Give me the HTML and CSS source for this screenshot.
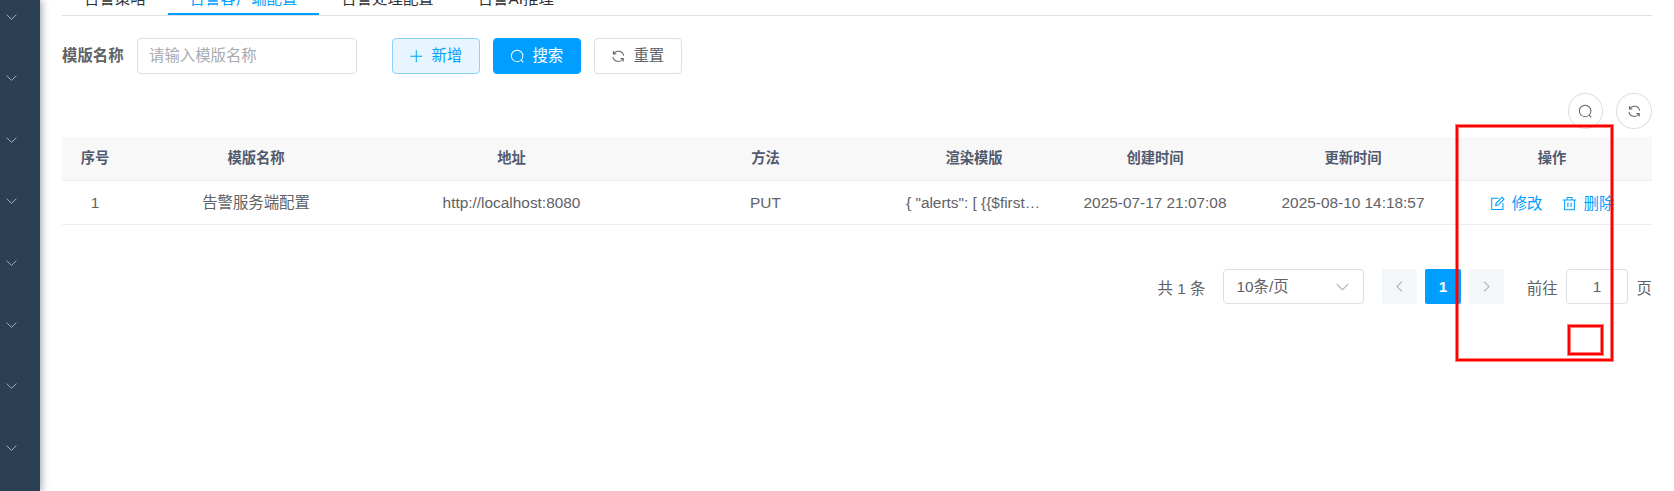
FILE: index.html
```html
<!DOCTYPE html>
<html lang="zh-CN">
<head>
<meta charset="utf-8">
<title>告警客户端配置</title>
<link rel="stylesheet" href="styles.css">
</head>
<body>
<svg class="defs" aria-hidden="true">
  <symbol id="down" viewBox="0 0 16 10"><path d="M1 1.5 8 8.5 15 1.5"/></symbol>
  <symbol id="left" viewBox="0 0 10 16"><path d="M8.5 1 1.5 8 8.5 15"/></symbol>
  <symbol id="right" viewBox="0 0 10 16"><path d="M1.5 1 8.5 8 1.5 15"/></symbol>
  <symbol id="plus" viewBox="0 0 16 16"><path d="M8 1.5v13M1.5 8h13"/></symbol>
  <symbol id="search" viewBox="0 0 16 16"><circle cx="7.8" cy="7.6" r="6.3"/><path d="m12.2 12.2 2.4 2.5"/></symbol>
  <symbol id="refresh" viewBox="0 0 16 16"><path d="M2.6 2.3v3.2h3.2M2.8 5.4A6 6 0 0 1 13.9 7.4M13.4 13.7v-3.2h-3.2M13.2 10.6A6 6 0 0 1 2.1 8.6"/></symbol>
  <symbol id="edit" viewBox="0 0 16 16"><path d="M9 2.5H1.8v11.8h12V7.4M6 10.2l.6-2.7 6.3-6.1 2 2-6.2 6.2z"/></symbol>
  <symbol id="trash" viewBox="0 0 16 16"><path d="M.8 4.2h14.4M2.8 4.2v10.4h10.4V4.2M5.4 4V1.7h5.2V4M6.3 6.8v5M9.7 6.8v5"/></symbol>
</svg>
<div class="app">
  <aside class="sidebar">
    <svg class="arrow"><use href="#down"/></svg>
    <svg class="arrow"><use href="#down"/></svg>
    <svg class="arrow"><use href="#down"/></svg>
    <svg class="arrow"><use href="#down"/></svg>
    <svg class="arrow"><use href="#down"/></svg>
    <svg class="arrow"><use href="#down"/></svg>
    <svg class="arrow"><use href="#down"/></svg>
    <svg class="arrow"><use href="#down"/></svg>
  </aside>
  <main class="content">
    <nav class="tabs">
      <a class="tab">告警策略</a>
      <a class="tab active">告警客户端配置</a>
      <a class="tab">告警处理配置</a>
      <a class="tab">告警AI推理</a>
    </nav>
    <form class="query">
      <label class="label">模版名称</label>
      <div class="input">请输入模版名称</div>
      <button type="button" class="btn plain"><svg class="icon"><use href="#plus"/></svg>新增</button>
      <button type="button" class="btn primary"><svg class="icon"><use href="#search"/></svg>搜索</button>
      <button type="button" class="btn"><svg class="icon"><use href="#refresh"/></svg>重置</button>
    </form>
    <div class="tools">
      <button type="button" class="round"><svg class="icon"><use href="#search"/></svg></button>
      <button type="button" class="round"><svg class="icon"><use href="#refresh"/></svg></button>
    </div>
    <div class="table">
      <div class="row head">
        <span>序号</span><span>模版名称</span><span>地址</span><span>方法</span><span>渲染模版</span><span>创建时间</span><span>更新时间</span><span>操作</span>
      </div>
      <div class="row">
        <span>1</span><span>告警服务端配置</span><span>http://localhost:8080</span><span>PUT</span><span class="clip">{ "alerts": [ {{$first…</span><span>2025-07-17 21:07:08</span><span>2025-08-10 14:18:57</span>
        <span class="actions"><a class="link"><svg class="icon"><use href="#edit"/></svg>修改</a><a class="link"><svg class="icon"><use href="#trash"/></svg>删除</a></span>
      </div>
    </div>
    <div class="pagination">
      <span class="note">共 1 条</span>
      <div class="select">10条/页<svg class="caret"><use href="#down"/></svg></div>
      <div class="pager">
        <span class="page"><svg class="step"><use href="#left"/></svg></span>
        <span class="page current">1</span>
        <span class="page"><svg class="step"><use href="#right"/></svg></span>
      </div>
      <span class="note goto">前往</span>
      <div class="jump">1</div>
      <span class="note">页</span>
    </div>
  </main>
  <div class="mark mark-large"></div>
  <div class="mark mark-small"></div>
</div>
</body>
</html>
```
FILE: styles.css
```css
* { box-sizing: border-box; }
body {
  margin: 0;
  background: #fff;
  color: #606266;
  font: 15.4px/22px "Liberation Sans", "Noto Sans CJK SC", sans-serif;
}
.defs { display: none; }
svg { fill: none; stroke: currentColor; stroke-width: 1.1; flex: none; }
.app { position: relative; display: flex; height: 491px; overflow: hidden; }
.sidebar {
  width: 40px;
  background: #2b4055;
  box-shadow: 2px 0 7px rgba(0, 21, 41, .35);
  padding: 12.6px 0 0 6px;
  display: flex;
  flex-direction: column;
  gap: 53.6px;
  color: #a4b5c6;
}
.arrow { width: 11px; height: 8px; stroke-width: 1.4; }
.content { flex: 1; padding: 0 22px; }
.tabs { display: flex; height: 16px; margin-top: -1px; border-bottom: 1px solid #dcdfe6; color: #303133; }
.content { padding-top: 1px; }
.tab { height: 15px; padding: 0 22px 5px; display: flex; align-items: flex-end; }
.tab.active { color: #009fff; box-shadow: inset 0 -2px #009fff; }
.query { display: flex; align-items: center; margin-top: 22px; height: 36px; }
.label { width: 75px; font-weight: 700; }
.input { width: 220px; height: 36px; border: 1px solid #dcdfe6; border-radius: 4px; padding: 0 11px; line-height: 34px; color: #a8abb2; margin-right: 35px; }
.btn { width: 88px; height: 36px; border: 1px solid #dcdfe6; border-radius: 4px; background: #fff; color: #606266; font: inherit; display: flex; align-items: center; justify-content: center; gap: 8px; padding: 0 1px 0 0; margin-right: 13px; }
.btn.plain { background: #e6f5ff; border-color: #8cd0ff; color: #009fff; }
.btn.primary { background: #009fff; border-color: #009fff; color: #fff; }
.icon { width: 15px; height: 15px; }
.btn .icon, .round .icon { width: 14.6px; height: 14.6px; }
.tools { display: flex; justify-content: flex-end; gap: 13px; margin-top: 19px; }
.round { width: 35.6px; height: 36px; border: 1px solid #dcdfe6; border-radius: 50%; background: #fff; color: #606266; padding: 0; display: grid; place-items: center; }
.table { margin-top: 8px; }
.row { display: grid; grid-template-columns: 66px 256px 255px 253px 164px 198px 198px 1fr; height: 44px; align-items: center; text-align: center; border-bottom: 1px solid #ebeef5; }
.head { background: #f8f8f9; color: #515a6e; font-size: 14.3px; font-weight: 700; padding-bottom: 1px; }
.clip { text-align: left; padding-left: 14px; white-space: nowrap; }
.actions { display: flex; justify-content: center; gap: 19px; padding-top: 2px; }
.link { display: flex; align-items: center; gap: 7px; color: #009fff; }
.pagination { display: flex; align-items: center; justify-content: flex-end; margin-top: 44px; height: 35px; }
.note { padding-top: 4px; }
.select { width: 141px; height: 35px; margin: 0 18px; border: 1px solid #dcdfe6; border-radius: 4px; padding: 0 14px 0 12px; display: flex; align-items: center; justify-content: space-between; }
.caret { width: 13px; height: 8px; color: #a8abb2; stroke-width: 1.4; }
.pager { display: flex; gap: 8.4px; margin: 0 .6px 0 -.6px; }
.page { width: 35.2px; height: 35px; border-radius: 2px; background: #f4f7fa; color: #a8abb2; display: grid; place-items: center; }
.page.current { background: #009fff; color: #fff; font-weight: 700; }
.step { width: 7px; height: 11px; stroke-width: 1.5; }
.goto { margin-left: 22px; }
.jump { width: 62px; height: 35px; margin: 0 9px 0 8px; border: 1px solid #dcdfe6; border-radius: 4px; padding-left: 1px; text-align: center; line-height: 33px; }
.mark { position: absolute; border: 2px solid #f00; box-shadow: 0 0 0 1px rgba(255, 0, 0, .5), inset 0 0 0 1px rgba(255, 0, 0, .5); }
.mark-large { left: 1456px; top: 125px; width: 157px; height: 236px; }
.mark-small { left: 1568px; top: 325px; width: 35px; height: 30px; }
```
